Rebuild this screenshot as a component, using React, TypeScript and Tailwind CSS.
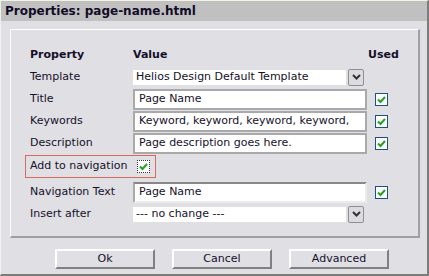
import React from "react";

const font = { fontFamily: "'DejaVu Sans', Verdana, sans-serif" };

const Check = ({ focus }: { focus?: boolean }) => (
  <div
    className={`w-[13px] h-[13px] bg-white flex items-center justify-center ${
      focus ? "border border-dotted border-[#333]" : "border border-[#1c5180]"
    }`}
  >
    <svg width="9" height="9" viewBox="0 0 9 9">
      <path d="M1 4.5 L3.5 7 L8 2" stroke="#21a121" strokeWidth="2" fill="none" />
    </svg>
  </div>
);

const Arrow = () => (
  <div className="w-[16px] h-[17px] ml-[2px] rounded-[2px] border border-[#8e8f8f] bg-[#dcdce0] flex items-center justify-center">
    <svg width="9" height="6" viewBox="0 0 9 6">
      <path d="M1 1 L4.5 4.5 L8 1" stroke="#333" strokeWidth="2" fill="none" />
    </svg>
  </div>
);

const Row = ({ label, children, h = "h-[22px]" }: { label: string; children?: React.ReactNode; h?: string }) => (
  <div className={`flex items-center ${h}`}>
    <div className="w-[122px] shrink-0 pl-[19px] whitespace-nowrap">{label}</div>
    {children}
  </div>
);

const TextBox = ({ value, sunken }: { value: string; sunken?: boolean }) => (
  <div
    className={`w-[234px] h-[21px] bg-white flex items-center pl-[4px] overflow-hidden whitespace-nowrap border-2 ${
      sunken ? "border-t-[#888] border-l-[#aaa] border-r-[#ececec] border-b-[#ececec]" : "border-[#a9a9ab]"
    }`}
  >
    {value}
  </div>
);

const Select = ({ value }: { value: string }) => (
  <div className="flex items-center">
    <div className="w-[213px] h-[15px] bg-white flex items-center pl-[3px] whitespace-nowrap overflow-hidden">
      {value}
    </div>
    <Arrow />
  </div>
);

const Btn = ({ label }: { label: string }) => (
  <div className="w-[100px] h-[20px] flex items-center justify-center border-2 border-t-white border-l-white border-r-[#808080] border-b-[#808080] bg-[#e0dfe3]">
    {label}
  </div>
);

export default function App() {
  return (
    <div
      className="w-[429px] h-[276px] bg-[#e0dfe3] text-[11px] text-[#15102a] border-t border-t-[#f4f3e6] border-r-2 border-r-[#7c7c7c] border-b-2 border-b-[#7c7c7c] border-l border-l-[#f0f0f0] flex flex-col"
      style={font}
    >
      <div className="h-[20px] bg-[#c0c0c0] pl-[4px] flex items-center font-bold text-[12px] text-[#120c28]">
        Properties: page-name.html
      </div>
      <div className="mt-[8px] ml-[9px] w-[410px] h-[209px] border-t border-l border-t-white border-l-white border-r-2 border-b-2 border-r-[#a0a0a0] border-b-[#a0a0a0] pt-[14px]">
        <div className="flex items-center h-[22px] font-bold">
          <div className="w-[122px] pl-[19px]">Property</div>
          <div className="w-[235px]">Value</div>
          <div>Used</div>
        </div>
        <Row label="Template">
          <Select value="Helios Design Default Template" />
        </Row>
        <Row label="Title">
          <TextBox value="Page Name" />
          <div className="ml-[8px]"><Check /></div>
        </Row>
        <Row label="Keywords">
          <TextBox value="Keyword, keyword, keyword, keyword," />
          <div className="ml-[8px]"><Check /></div>
        </Row>
        <Row label="Description">
          <TextBox value="Page description goes here." />
          <div className="ml-[8px]"><Check /></div>
        </Row>
        <div className="h-[24px] flex items-center">
          <div className="ml-[14px] w-[131px] h-[23px] border border-[#d9695f] flex items-center pl-[4px]">
            <span className="w-[107px]">Add to navigation</span>
            <Check focus />
          </div>
        </div>
        <Row label="Navigation Text" h="h-[25px] pt-[3px]">
          <TextBox value="Page Name" sunken />
          <div className="ml-[8px]"><Check /></div>
        </Row>
        <Row label="Insert after">
          <Select value="--- no change ---" />
        </Row>
      </div>
      <div className="flex gap-[17px] pl-[54px] mt-[11px]">
        <Btn label="Ok" />
        <Btn label="Cancel" />
        <Btn label="Advanced" />
      </div>
    </div>
  );
}
